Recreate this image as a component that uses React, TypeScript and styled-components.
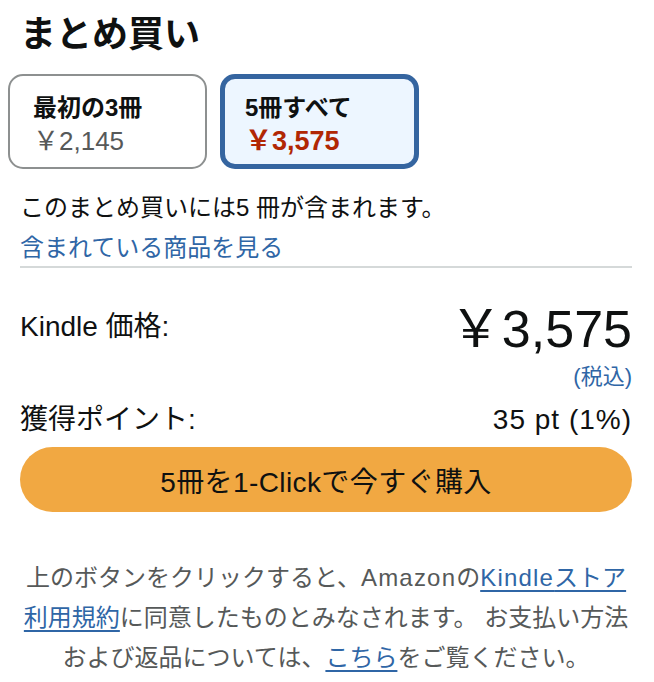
import React from "react";
import styled, { createGlobalStyle } from "styled-components";

const GlobalStyle = createGlobalStyle`
  body {
    margin: 0;
    background: #ffffff;
    font-family: "Liberation Sans", "Noto Sans CJK JP", sans-serif;
    color: #0f1111;
  }
`;

const Wrapper = styled.div`
  width: 654px;
  box-sizing: border-box;
  padding: 13px 22px 0 20px;
`;

const Title = styled.h2`
  margin: 0;
  font-size: 36px;
  line-height: 44px;
  font-weight: 700;
`;

const CardRow = styled.div`
  display: flex;
  gap: 13px;
  margin: 17px 0 0 -12px;
`;

const Card = styled.div<{ selected?: boolean }>`
  width: 199px;
  height: 95px;
  box-sizing: border-box;
  border: ${(p) => (p.selected ? "5px solid #3565a0" : "2px solid #8d9090")};
  border-radius: 15px;
  background: ${(p) => (p.selected ? "#edf6ff" : "#ffffff")};
  padding: ${(p) => (p.selected ? "14px 0 0 20px" : "17px 0 0 23px")};
  display: flex;
  flex-direction: column;
`;

const CardTitle = styled.span`
  font-size: 24px;
  line-height: 30px;
  font-weight: 700;
  color: #0f1111;
`;

const CardPrice = styled.span<{ selected?: boolean }>`
  font-size: ${(p) => (p.selected ? "27px" : "26px")};
  line-height: 36px;
  font-weight: ${(p) => (p.selected ? 700 : 400)};
  color: ${(p) => (p.selected ? "#b12704" : "#565959")};
`;

const InfoText = styled.div`
  margin-top: 21px;
  font-size: 24px;
  line-height: 36px;
`;

const PlainLink = styled.a`
  display: block;
  margin-top: 4px;
  font-size: 24px;
  line-height: 36px;
  color: #2f66a6;
  text-decoration: none;
`;

const Divider = styled.hr`
  margin: 0;
  border: none;
  height: 2px;
  background: #d5d9d9;
`;

const PriceRow = styled.div`
  display: flex;
  justify-content: space-between;
  align-items: center;
  height: 60px;
  margin-top: 29px;
`;

const RowLabel = styled.span`
  font-size: 28px;
  line-height: 36px;
`;

const RowValue = styled.span`
  font-size: 28px;
  line-height: 36px;
  letter-spacing: 1px;
`;

const BigPrice = styled.span`
  font-size: 52px;
  line-height: 60px;
  position: relative;
  top: 2px;
`;

const TaxNote = styled.div`
  margin-top: 6px;
  text-align: right;
  font-size: 22px;
  line-height: 28px;
  color: #2f66a6;
`;

const PointRow = styled.div`
  display: flex;
  justify-content: space-between;
  align-items: center;
  margin-top: 11px;
`;

const BuyButton = styled.button`
  display: block;
  width: 100%;
  height: 65px;
  margin-top: 9px;
  border: none;
  border-radius: 33px;
  background: #f1a842;
  color: #0f1111;
  font-family: inherit;
  font-size: 28px;
  letter-spacing: 0.4px;
  cursor: pointer;
`;

const Footer = styled.p`
  margin: 46px 0 0;
  text-align: center;
  font-size: 24px;
  line-height: 40px;
  color: #565959;
`;

const Latin = styled.span`
  letter-spacing: 1.2px;
`;

const FooterLink = styled.a`
  color: #2f66a6;
  text-decoration: underline;
  text-underline-offset: 4px;
`;

export default function App() {
  return (
    <>
      <GlobalStyle />
      <Wrapper>
        <Title>まとめ買い</Title>
        <CardRow>
          <Card>
            <CardTitle>最初の3冊</CardTitle>
            <CardPrice>￥2,145</CardPrice>
          </Card>
          <Card selected>
            <CardTitle>5冊すべて</CardTitle>
            <CardPrice selected>￥3,575</CardPrice>
          </Card>
        </CardRow>
        <InfoText>このまとめ買いには5 冊が含まれます。</InfoText>
        <PlainLink href="#">含まれている商品を見る</PlainLink>
        <Divider />
        <PriceRow>
          <RowLabel>Kindle 価格:</RowLabel>
          <BigPrice>￥3,575</BigPrice>
        </PriceRow>
        <TaxNote>(税込)</TaxNote>
        <PointRow>
          <RowLabel>獲得ポイント:</RowLabel>
          <RowValue>35 pt (1%)</RowValue>
        </PointRow>
        <BuyButton>5冊を1-Clickで今すぐ購入</BuyButton>
        <Footer>
          上のボタンをクリックすると、<Latin>Amazon</Latin>の
          <FooterLink href="#">
            <Latin>Kindle</Latin>ストア
            <br />
            利用規約
          </FooterLink>
          に同意したものとみなされます。 お支払い方法
          <br />
          および返品については、<FooterLink href="#">こちら</FooterLink>
          をご覧ください。
        </Footer>
      </Wrapper>
    </>
  );
}
